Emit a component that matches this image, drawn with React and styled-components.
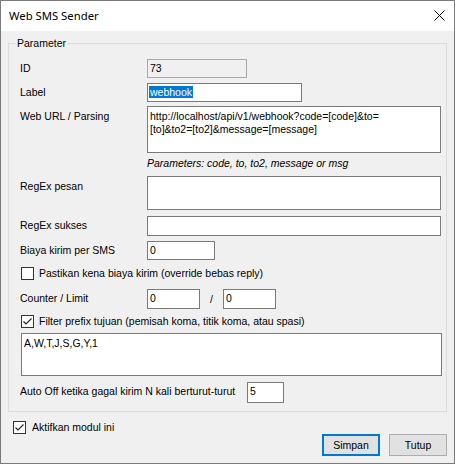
import React from 'react';
import styled, { createGlobalStyle } from 'styled-components';

const Global = createGlobalStyle`
  html, body { margin: 0; padding: 0; background: #fff; }
  * { box-sizing: border-box; }
`;

const Window = styled.div`
  width: 455px;
  height: 464px;
  border: 1px solid #7a7a7a;
  background: #f0f0f0;
  display: flex;
  flex-direction: column;
  font-family: "Liberation Sans", Arial, sans-serif;
  font-size: 10.5px;
  color: #000;
`;

const TitleBar = styled.div`
  height: 30px;
  flex: none;
  background: #fff;
  display: flex;
  align-items: center;
  justify-content: space-between;
  padding: 0 9px 0 8px;
`;

const Title = styled.span`
  font-family: "Noto Sans", "Open Sans", sans-serif;
  font-size: 11.3px;
  line-height: 16px;
  color: #000;
`;

const CloseIcon = styled.svg`
  width: 11px;
  height: 11px;
  display: block;
  margin-top: -2px;
`;

const Body = styled.div`
  flex: 1;
  display: flex;
  flex-direction: column;
  padding: 6px 7px 0 7px;
`;

const Group = styled.fieldset`
  margin: 0;
  padding: 0 5px 8px 11px;
  border: 1px solid #dcdcdc;
  min-width: 0;
  display: flex;
  flex-direction: column;
`;

const Legend = styled.legend`
  padding: 0 1px;
  margin-left: -4px;
  line-height: 13px;
`;

const Row = styled.div`
  display: grid;
  grid-template-columns: ${p => p.$cols || '127px 1fr'};
  align-items: start;
  margin-top: ${p => p.$mt}px;
`;

const Label = styled.div`
  padding-top: ${p => (p.$pt != null ? p.$pt : 3)}px;
  line-height: 13px;
  white-space: nowrap;
`;

const TextBox = styled.div`
  width: ${p => (p.$w ? `${p.$w}px` : '100%')};
  height: ${p => p.$h || 20}px;
  border: 1px solid ${p => (p.$readonly ? '#a9a9a9' : '#7a7a7a')};
  background: ${p => (p.$readonly ? '#f0f0f0' : '#fff')};
  padding: ${p => (p.$multi ? '3px 2px' : '2px 2px')};
  line-height: 13px;
  white-space: pre;
  overflow: hidden;
  margin-left: ${p => p.$ml || 0}px;
`;

const Selected = styled.span`
  background: #0078d7;
  color: #fff;
  margin-left: -1px;
  padding: 0 1px;
`;

const Hint = styled.div`
  font-style: italic;
  line-height: 13px;
`;

const Inline = styled.div`
  display: flex;
  align-items: center;
`;

const Slash = styled.span`
  width: 23px;
  text-align: center;
  line-height: 13px;
`;

const CheckRow = styled.label`
  display: flex;
  align-items: center;
  gap: ${p => p.$gap || 5}px;
  margin-top: ${p => p.$mt}px;
  margin-left: ${p => p.$ml || 0}px;
  height: 13px;
  line-height: 13px;
`;

const Box = styled.span`
  width: 13px;
  height: 13px;
  flex: none;
  border: 1px solid #333;
  background: #fff;
  display: flex;
  align-items: center;
  justify-content: center;
`;

const Footer = styled.div`
  display: flex;
  flex-direction: column;
`;

const Buttons = styled.div`
  display: flex;
  justify-content: flex-end;
  gap: 9px;
`;

const Button = styled.div`
  width: 58px;
  height: 22px;
  display: flex;
  align-items: center;
  justify-content: center;
  background: #e1e1e1;
  border: ${p => (p.$primary ? '2px solid #0078d7' : '1px solid #adadad')};
  line-height: 13px;
`;

const Check = ({ checked }) => (
  <Box>
    {checked && (
      <svg width="11" height="11" viewBox="0 0 11 11">
        <polyline points="1.5,5.5 4,8 9.5,2.5" fill="none" stroke="#222" strokeWidth="1.1" />
      </svg>
    )}
  </Box>
);

export default function App() {
  return (
    <>
      <Global />
      <Window>
        <TitleBar>
          <Title>Web SMS Sender</Title>
          <CloseIcon viewBox="0 0 11 11">
            <path d="M0.5 0.5 L10.5 10.5 M10.5 0.5 L0.5 10.5" stroke="#000" strokeWidth="1" />
          </CloseIcon>
        </TitleBar>
        <Body>
          <Group>
            <Legend>Parameter</Legend>
            <Row $mt={9}>
              <Label>ID</Label>
              <TextBox $w={100} $h={19} $readonly>73</TextBox>
            </Row>
            <Row $mt={5}>
              <Label>Label</Label>
              <TextBox $w={155} $h={19}><Selected>webhook</Selected></TextBox>
            </Row>
            <Row $mt={4}>
              <Label $pt={4}>Web URL / Parsing</Label>
              <TextBox $h={47} $multi>{'http://localhost/api/v1/webhook?code=[code]&to=\n[to]&to2=[to2]&message=[message]'}</TextBox>
            </Row>
            <Row $mt={4}>
              <span />
              <Hint>Parameters: code, to, to2, message or msg</Hint>
            </Row>
            <Row $mt={6}>
              <Label $pt={4}>RegEx pesan</Label>
              <TextBox $h={34} $multi />
            </Row>
            <Row $mt={6}>
              <Label>RegEx sukses</Label>
              <TextBox $h={20} />
            </Row>
            <Row $mt={5}>
              <Label>Biaya kirim per SMS</Label>
              <TextBox $w={68} $h={19}>0</TextBox>
            </Row>
            <CheckRow $mt={7} $ml={1}>
              <Check />
              <span>Pastikan kena biaya kirim (override bebas reply)</span>
            </CheckRow>
            <Row $mt={9}>
              <Label>Counter / Limit</Label>
              <Inline>
                <TextBox $w={53} $h={20}>0</TextBox>
                <Slash>/</Slash>
                <TextBox $w={53} $h={20}>0</TextBox>
              </Inline>
            </Row>
            <CheckRow $mt={6} $ml={1}>
              <Check checked />
              <span>Filter prefix tujuan (pemisah koma, titik koma, atau spasi)</span>
            </CheckRow>
            <Row $mt={5} $cols="1fr">
              <TextBox $h={43} $ml={1} $multi>A,W,T,J,S,G,Y,1</TextBox>
            </Row>
            <Row $mt={6} $cols="227px 37px">
              <Label>Auto Off ketika gagal kirim N kali berturut-turut</Label>
              <TextBox $w={37} $h={21}>5</TextBox>
            </Row>
          </Group>
          <Footer>
            <CheckRow $mt={9} $ml={5} $gap={6}>
              <Check checked />
              <span>Aktifkan modul ini</span>
            </CheckRow>
            <Buttons>
              <Button $primary>Simpan</Button>
              <Button>Tutup</Button>
            </Buttons>
          </Footer>
        </Body>
      </Window>
    </>
  );
}
